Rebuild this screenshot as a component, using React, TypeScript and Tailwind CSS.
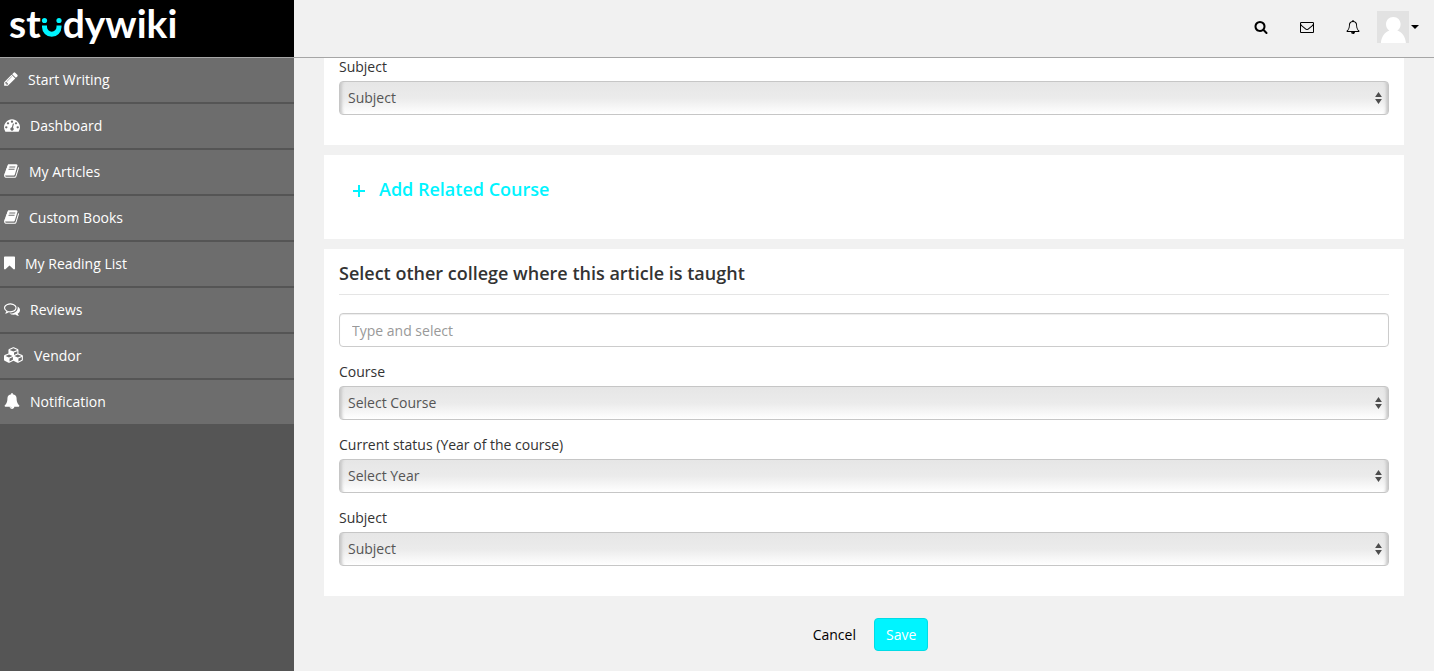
import { useId, type ReactNode } from "react";

type IconProps = { viewBox: string; d: string; className: string };

function Icon({ viewBox, d, className }: IconProps) {
  return (
    <svg viewBox={viewBox} className={className} fill="currentColor" aria-hidden="true">
      <path d={d} />
    </svg>
  );
}

const BOOK =
  "M1703 478q40 57 18 129l-275 906q-19 64-76.5 107.5t-122.5 43.5h-923q-77 0-148.5-53.5t-99.5-131.5q-24-67-2-127 0-4 3-27t4-37q1-8-3-21.5t-3-19.5q2-11 8-21t16.5-23.5 16.5-23.5q23-38 45-91.5t30-91.5q3-10 .5-30t-.5-28q3-11 17-28t17-23q21-36 42-92t25-90q1-9-2.5-32t.5-28q4-13 22-30.5t22-22.5q19-26 42.5-84.5t27.5-96.5q1-8-3-25.5t-2-26.5q2-8 9-18t18-23 17-21q8-12 16.5-30.5t15-35 16-36 19.5-32 26.5-23.5 36-11.5 47.5 5.5l-1 3q38-9 51-9h761q74 0 114 56t18 130l-274 906q-36 119-71.5 153.5t-128.5 34.5h-869q-27 0-38 15-11 16-1 43 24 70 144 70h923q29 0 56-15.5t35-41.5l300-987q7-22 5-57 38 15 59 43zm-1064 2q-4 13 2 22.5t20 9.5h608q13 0 25.5-9.5t16.5-22.5l21-64q4-13-2-22.5t-20-9.5h-608q-13 0-25.5 9.5t-16.5 22.5zm-83 256q-4 13 2 22.5t20 9.5h608q13 0 25.5-9.5t16.5-22.5l21-64q4-13-2-22.5t-20-9.5h-608q-13 0-25.5 9.5t-16.5 22.5z";

const SEARCH =
  "M1216 832q0-185-131.5-316.5t-316.5-131.5-316.5 131.5-131.5 316.5 131.5 316.5 316.5 131.5 316.5-131.5 131.5-316.5zm512 832q0 52-38 90t-90 38q-54 0-90-38l-343-342q-179 124-399 124-143 0-273.5-55.5t-225-150-150-225-55.5-273.5 55.5-273.5 150-225 225-150 273.5-55.5 273.5 55.5 225 150 150 225 55.5 273.5q0 220-124 399l343 343q37 37 37 90z";

const ENVELOPE =
  "M1664 1504v-768q-32 36-69 66-268 206-426 338-51 43-83 67t-86.5 48.5-102.5 24.5h-2q-48 0-102.5-24.5t-86.5-48.5-83-67q-158-132-426-338-37-30-69-66v768q0 13 9.5 22.5t22.5 9.5h1472q13 0 22.5-9.5t9.5-22.5zm0-1051v-24.5l-.5-13-3-12.5-5.5-9-9-7.5-14-2.5h-1472q-13 0-22.5 9.5t-9.5 22.5q0 168 147 284 193 152 401 317 6 5 35 29.5t46 37.5 44.5 31.5 50.5 27.5 43 9h2q20 0 43-9t50.5-27.5 44.5-31.5 46-37.5 35-29.5q208-165 401-317 54-43 100.5-115.5t46.5-131.5zm128-37v1088q0 66-47 113t-113 47h-1472q-66 0-113-47t-47-113v-1088q0-66 47-113t113-47h1472q66 0 113 47t47 113z";

const BELL_OUTLINE =
  "M912 1696q0-16-16-16-59 0-101.5-42.5t-42.5-101.5q0-16-16-16t-16 16q0 73 51.5 124.5t124.5 51.5q16 0 16-16zm-666-288h1300q-266-300-266-832 0-51-24-105t-69-103-121.5-80.5-169.5-31.5-169.5 31.5-121.5 80.5-69 103-24 105q0 532-266 832zm1482 0q0 52-38 90t-90 38h-448q0 106-75 181t-181 75-181-75-75-181h-448q-52 0-90-38t-38-90q50-42 91-88t85-119.5 74.5-158.5 50-206 19.5-260q0-152 117-282.5t307-158.5q-8-19-8-39 0-40 28-68t68-28 68 28 28 68q0 20-8 39 190 28 307 158.5t117 282.5q0 139 19.5 260t50 206 74.5 158.5 85 119.5 91 88z";

const navItems: { label: string; icon: IconProps }[] = [
  {
    label: "Start Writing",
    icon: {
      className: "h-4 w-3.5",
      viewBox: "128 0 1536 1792",
      d: "M491 1536l91-91-235-235-91 91v107h128v128h107zm523-928q0-22-22-22-10 0-17 7l-542 542q-7 7-7 17 0 22 22 22 10 0 17-7l542-542q7-7 7-17zm-54-192l416 416-832 832h-416v-416zm683 96q0 53-37 90l-166 166-416-416 166-165q36-38 90-38 53 0 91 38l235 234q37 39 37 91z",
    },
  },
  {
    label: "Dashboard",
    icon: {
      className: "size-4",
      viewBox: "0 0 1792 1792",
      d: "M384 1152q0-53-37.5-90.5t-90.5-37.5-90.5 37.5-37.5 90.5 37.5 90.5 90.5 37.5 90.5-37.5 37.5-90.5zm192-448q0-53-37.5-90.5t-90.5-37.5-90.5 37.5-37.5 90.5 37.5 90.5 90.5 37.5 90.5-37.5 37.5-90.5zm428 481l101-382q6-26-7.5-48.5t-38.5-29.5-48 6.5-30 39.5l-101 382q-60 5-107 43.5t-63 98.5q-20 77 20 146t117 89 146-20 89-117q16-60-6-117t-72-91zm660-33q0-53-37.5-90.5t-90.5-37.5-90.5 37.5-37.5 90.5 37.5 90.5 90.5 37.5 90.5-37.5 37.5-90.5zm-640-640q0-53-37.5-90.5t-90.5-37.5-90.5 37.5-37.5 90.5 37.5 90.5 90.5 37.5 90.5-37.5 37.5-90.5zm448 192q0-53-37.5-90.5t-90.5-37.5-90.5 37.5-37.5 90.5 37.5 90.5 90.5 37.5 90.5-37.5 37.5-90.5zm320 448q0 261-141 483-19 29-54 29h-1402q-35 0-54-29-141-221-141-483 0-182 71-348t191-286 286-191 348-71 348 71 286 191 191 286 71 348z",
    },
  },
  { label: "My Articles", icon: { className: "h-4 w-[15px]", viewBox: "64 0 1664 1792", d: BOOK } },
  { label: "Custom Books", icon: { className: "h-4 w-[15px]", viewBox: "64 0 1664 1792", d: BOOK } },
  {
    label: "My Reading List",
    icon: {
      className: "h-4 w-[11px]",
      viewBox: "256 0 1280 1792",
      d: "M1420 128q23 0 44 9 33 13 52.5 41t19.5 62v1289q0 34-19.5 62t-52.5 41q-19 8-44 8-48 0-83-32l-441-424-441 424q-36 33-83 33-23 0-44-9-33-13-52.5-41t-19.5-62v-1289q0-34 19.5-62t52.5-41q21-9 44-9h1048z",
    },
  },
  {
    label: "Reviews",
    icon: {
      className: "size-4",
      viewBox: "0 0 1792 1792",
      d: "M704 384q-153 0-286 52t-211.5 141-78.5 191q0 82 53 158t149 132l97 56-35 84q34-20 62-39l44-31 53 10q78 14 153 14 153 0 286-52t211.5-141 78.5-191-78.5-191-211.5-141-286-52zm0-128q191 0 353.5 68.5t256.5 186.5 94 257-94 257-256.5 186.5-353.5 68.5q-86 0-176-16-124 88-278 128-36 9-86 16h-3q-11 0-20.5-8t-11.5-21q-1-3-1-6.5t.5-6.5 2-6l2.5-5 3.5-5.5 4-5 4.5-5 4-4.5q5-6 23-25t26-29.5 22.5-29 25-38.5 20.5-44q-124-72-195-177t-71-224q0-139 94-257t256.5-186.5 353.5-68.5zm822 1169q10 24 20.5 44t25 38.5 22.5 29 26 29.5 23 25q1 1 4 4.5t4.5 5 4 5 3.500 5.500l2.500 5 2 6 .500 6.500-1 6.500q-3 14-13 22t-22 7q-50-7-86-16-154-40-278-128-90 16-176 16-271 0-472-132 58 4 88 4 161 0 309-45t264-129q125-92 192-212t67-254q0-77-23-152 129 71 204 178t75 230q0 120-71 224.500t-195 176.500z",
    },
  },
  {
    label: "Vendor",
    icon: {
      className: "h-4 w-5",
      viewBox: "0 0 2304 1792",
      d: "M640 1632l384-192v-314l-384 164v342zm-64-454l404-173-404-173-404 173zm1088 454l384-192v-314l-384 164v342zm-64-454l404-173-404-173-404 173zm-448-293l384-165v-266l-384 164v267zm-64-379l441-189-441-189-441 189zm1088 518v416q0 36-19 67t-52 47l-448 224q-25 14-57 14t-57-14l-448-224q-4-2-7-4-2 2-7 4l-448 224q-25 14-57 14t-57-14l-448-224q-33-16-52-47t-19-67v-416q0-38 21.5-70t56.5-48l434-186v-400q0-38 21.5-70t56.5-48l448-192q23-10 50-10t50 10l448 192q35 16 56.5 48t21.5 70v400l434 186q36 16 57 48t21 70z",
    },
  },
  {
    label: "Notification",
    icon: {
      className: "size-4",
      viewBox: "0 0 1792 1792",
      d: "M912 1696q0-16-16-16-59 0-101.5-42.5t-42.5-101.5q0-16-16-16t-16 16q0 73 51.5 124.5t124.5 51.5q16 0 16-16zm816-288q0 52-38 90t-90 38h-448q0 106-75 181t-181 75-181-75-75-181h-448q-52 0-90-38t-38-90q50-42 91-88t85-119.5 74.5-158.5 50-206 19.5-260q0-152 117-282.5t307-158.5q-8-19-8-39 0-40 28-68t68-28 68 28 28 68q0 20-8 39 190 28 307 158.5t117 282.5q0 139 19.5 260t50 206 74.5 158.5 85 119.5 91 88z",
    },
  },
];

function Logo() {
  return (
    <a
      href="#home"
      aria-label="studywiki"
      className="flex h-[57px] items-start bg-black pl-[9px] font-['Lato',sans-serif] text-[39px] leading-[46px] font-bold text-white"
    >
      <span>st</span>
      <svg viewBox="0 0 22 46" className="h-[46px] w-[22px] text-[#00f4ff]" aria-hidden="true">
        <circle cx="3.500" cy="20.500" r="2.600" fill="currentColor" />
        <circle cx="18" cy="20.500" r="2.600" fill="currentColor" />
        <path d="M3.500 25.500v1.500a7.200 7.200 0 0 0 14.500 0v-1.500" fill="none" stroke="currentColor" strokeWidth="5" />
      </svg>
      <span>dywiki</span>
    </a>
  );
}

function Sidebar() {
  return (
    <aside className="flex w-[294px] shrink-0 flex-col bg-[#555]">
      <Logo />
      <nav className="border-t border-[#a6a6a6]">
        <ul>
          {navItems.map((item) => (
            <li key={item.label} className="border-b-2 border-[#555]">
              <a href="#menu" className="flex h-11 items-center gap-2.5 bg-[#6d6d6d] pl-1 text-white">
                <span className="pb-0.5">
                  <Icon {...item.icon} />
                </span>
                {item.label}
              </a>
            </li>
          ))}
        </ul>
      </nav>
    </aside>
  );
}

function TopBar() {
  return (
    <header className="relative flex h-[58px] items-center justify-end border-b border-[#a6a6a6] bg-[#f1f1f1] pr-[15px] pb-[3px] text-black">
      <div className="flex items-center gap-8 pr-[17px]">
        <button type="button" aria-label="Search">
          <Icon viewBox="0 0 1792 1792" d={SEARCH} className="size-3.5" />
        </button>
        <button type="button" aria-label="Messages">
          <Icon viewBox="0 0 1792 1792" d={ENVELOPE} className="size-3.5" />
        </button>
        <button type="button" aria-label="Alerts">
          <Icon viewBox="0 0 1792 1792" d={BELL_OUTLINE} className="size-3.5" />
        </button>
      </div>
      <button type="button" aria-label="Account" className="flex items-center gap-0.5">
        <svg viewBox="0 0 32 32" className="size-8" aria-hidden="true">
          <rect width="32" height="32" fill="#e2e2e2" />
          <path
            d="M16.3 6c4.3 0 7.3 3.2 7.3 7.2 0 2.8-1.3 5-3.3 6.3 4.8 1.5 8.2 6.5 8.6 12.5H3.9c.4-6 3.9-11 8.500-12.500-2-1.300-3.400-3.500-3.400-6.300C9 9.200 12 6 16.300 6z"
            fill="#fff"
          />
        </svg>
        <svg viewBox="0 0 8 4" className="h-1 w-2" aria-hidden="true">
          <path d="M0 0h8l-4 4z" fill="currentColor" />
        </svg>
      </button>
    </header>
  );
}

function Panel({ children, className }: { children: ReactNode; className: string }) {
  return <section className={`bg-white px-[15px] ${className}`}>{children}</section>;
}

function SelectField({ label, placeholder }: { label: string; placeholder: string }) {
  const id = useId();
  return (
    <div className="mb-[15px]">
      <label htmlFor={id} className="mb-1 block text-[#333]">
        {label}
      </label>
      <div className="relative">
        <select
          id={id}
          className="block h-[34px] w-full appearance-none rounded border border-[#c6c6c6] bg-linear-to-b from-[#e6e6e6] via-[#ebebeb] to-white px-2 text-[#555] shadow-[inset_6px_0_3px_-4px_#c8c8c8,inset_-6px_0_3px_-4px_#c8c8c8]"
        >
          <option>{placeholder}</option>
        </select>
        <svg
          viewBox="0 0 7 12"
          className="pointer-events-none absolute top-[11px] right-[7px] h-3 w-[7px]"
          fill="#4d4d4d"
          aria-hidden="true"
        >
          <path d="M3.500 0L6.900 5H.1zM3.500 12L6.900 7H.1z" />
        </svg>
      </div>
    </div>
  );
}

export default function App() {
  return (
    <div className="flex min-h-screen bg-[#f1f1f1] font-['Open_Sans',sans-serif] text-sm leading-5">
      <Sidebar />
      <div className="flex min-w-0 flex-1 flex-col">
        <TopBar />
        <main className="-mt-px flex flex-col gap-2.5 px-[30px] pb-5">
          <Panel className="pb-[15px]">
            <SelectField label="Subject" placeholder="Subject" />
          </Panel>
          <Panel className="h-[84px] pt-[21px]">
            <button type="button" className="flex items-center gap-3.5 pl-3.5 text-lg leading-[26px] font-semibold text-[#00f4ff]">
              <svg viewBox="0 0 12 12" className="mt-1 size-3" aria-hidden="true">
                <path d="M6 0v12M0 6h12" stroke="currentColor" strokeWidth="2" />
              </svg>
              Add Related Course
            </button>
          </Panel>
          <Panel className="pt-3 pb-[15px]">
            <h2 className="mb-[18px] border-b border-[#e5e5e5] pb-2 text-lg leading-[25px] font-semibold text-[#333]">
              Select other college where this article is taught
            </h2>
            <input
              type="text"
              aria-label="College"
              placeholder="Type and select"
              className="mb-[15px] block h-[34px] w-full rounded border border-[#ccc] px-3 text-[#555] shadow-[inset_0_1px_1px_rgba(0,0,0,0.075)] placeholder:text-[#999]"
            />
            <SelectField label="Course" placeholder="Select Course" />
            <SelectField label="Current status (Year of the course)" placeholder="Select Year" />
            <SelectField label="Subject" placeholder="Subject" />
          </Panel>
          <div className="flex justify-center gap-[5px] pt-3">
            <button type="button" className="h-[33px] px-[13px] text-black">
              Cancel
            </button>
            <button type="button" className="h-[33px] rounded border border-[#00dce6] bg-[#00f4ff] px-[11px] text-white">
              Save
            </button>
          </div>
        </main>
      </div>
    </div>
  );
}
